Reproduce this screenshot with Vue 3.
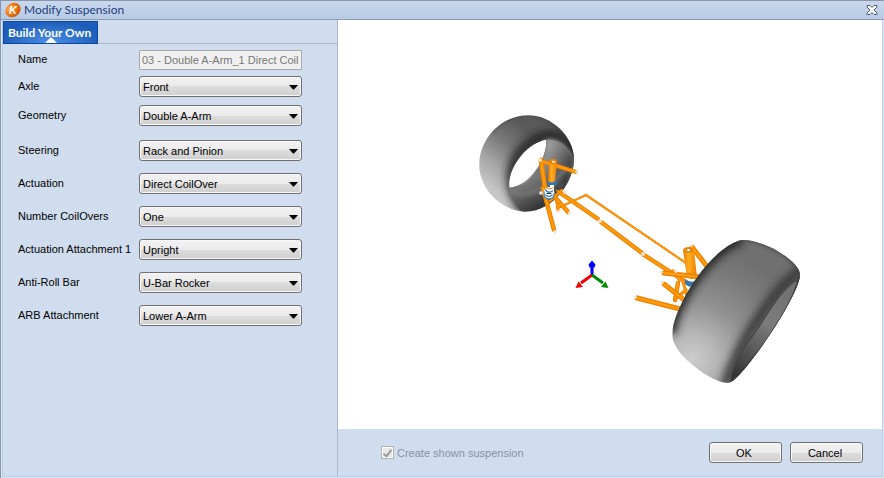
<script setup>
import { ref } from 'vue'

const name = ref('03 - Double A-Arm_1 Direct Coilover')
const shown = ref(true)

const groups = ref([
  {
    id: 'axle-group',
    fields: [{ id: 'axle', label: 'Axle', value: 'Front', options: ['Front', 'Rear'] }]
  },
  {
    id: 'geometry-group',
    fields: [{ id: 'geometry', label: 'Geometry', value: 'Double A-Arm', options: ['Double A-Arm'] }]
  },
  {
    id: 'details-group',
    fields: [
      { id: 'steering', label: 'Steering', value: 'Rack and Pinion', options: ['Rack and Pinion'] },
      { id: 'actuation', label: 'Actuation', value: 'Direct CoilOver', options: ['Direct CoilOver'] },
      { id: 'coilovers', label: 'Number CoilOvers', value: 'One', options: ['One', 'Two'] },
      { id: 'attachment', label: 'Actuation Attachment 1', value: 'Upright', options: ['Upright', 'Lower A-Arm'] },
      { id: 'antiroll', label: 'Anti-Roll Bar', value: 'U-Bar Rocker', options: ['U-Bar Rocker'] },
      { id: 'arb', label: 'ARB Attachment', value: 'Lower A-Arm', options: ['Lower A-Arm', 'Upright'] }
    ]
  }
])

// Suspension links: [x1, y1, x2, y2, thickness]
const rods = [
  [558, 208, 586, 195, 2.4],
  [586, 195, 686, 263, 2.2],
  [559, 192, 598, 219, 4.4],
  [601, 222, 642, 253, 4.4],
  [644, 255, 686, 282, 4.4],
  [556, 195, 558, 211, 3],
  [553, 195, 568, 212, 4.4],
  [550, 201, 562, 190, 2.5],
  [692, 247, 709, 269, 5],
  [681, 275, 688, 299, 3],
  [678, 283, 675, 300, 4.4],
  [675, 299, 686, 290, 3.4],
  [664, 284, 688, 303, 4.8],
  [637, 298, 684, 310, 5],
  [673, 271, 680, 280, 3.4],
  [541, 160, 545, 188, 5],
  [541, 161, 576, 172, 4.4],
  [543, 188, 554, 230, 4.6]
]
const joints = [
  [540, 160], [577, 172], [555, 232], [570, 213], [600, 221], [643, 254], [635, 297],
  [662, 282], [691, 245], [558, 212], [661, 272], [565, 192], [541, 193], [676, 271]
]
</script>

<template>
  <main class="dialog">
    <header class="titlebar">
      <svg class="logo" viewBox="0 0 16 16" aria-hidden="true">
        <defs>
          <radialGradient id="logoFill" cx=".4" cy=".3" r=".75">
            <stop offset="0" stop-color="#ffb25c" />
            <stop offset=".5" stop-color="#f47a12" />
            <stop offset="1" stop-color="#c24e00" />
          </radialGradient>
        </defs>
        <ellipse cx="8" cy="8" rx="8" ry="6.8" transform="rotate(-38 8 8)" fill="url(#logoFill)" />
        <text x="8" y="12" text-anchor="middle" class="logo-letter">K</text>
      </svg>
      <h1>Modify Suspension</h1>
      <button class="close" type="button" aria-label="Close">
        <svg viewBox="0 0 12 10" aria-hidden="true">
          <path d="M1 .5h3l2 2 2-2h3v1.5L8 5l3 3v1.5H8l-2-2-2 2H1V8l3-3-3-3z" fill="#fff" stroke="#525c70" />
        </svg>
      </button>
    </header>

    <div class="body">
      <section class="side">
        <nav class="tabs">
          <button class="tab" type="button">Build Your Own</button>
        </nav>
        <form class="form" @submit.prevent>
          <div class="row">
            <label for="name">Name</label>
            <input id="name" v-model="name" class="name" type="text" disabled />
          </div>
          <div v-for="g in groups" :key="g.id" class="group" :class="g.id">
            <div v-for="f in g.fields" :key="f.id" class="row">
              <label :for="f.id">{{ f.label }}</label>
              <div class="combo">
                <select :id="f.id" v-model="f.value">
                  <option v-for="o in f.options" :key="o">{{ o }}</option>
                </select>
                <svg class="arrow" viewBox="0 0 9 5" aria-hidden="true"><path d="M0 0h9L5 4.500H4z" /></svg>
              </div>
            </div>
          </div>
        </form>
      </section>

      <section class="main">
        <svg class="scene" viewBox="338 20 544 409" role="img" aria-label="Suspension preview">
          <defs>
            <linearGradient id="treadA" gradientUnits="userSpaceOnUse" x1="50" y1="240" x2="180" y2="80">
              <stop offset="0" stop-color="#c6c6c6" />
              <stop offset=".3" stop-color="#a6a6a6" />
              <stop offset=".65" stop-color="#787878" />
              <stop offset="1" stop-color="#5a5a5a" />
            </linearGradient>
            <linearGradient id="innerA" gradientUnits="userSpaceOnUse" x1="225" y1="130" x2="315" y2="180">
              <stop offset="0" stop-color="#a4a4a4" />
              <stop offset=".5" stop-color="#707070" />
              <stop offset="1" stop-color="#303030" />
            </linearGradient>
            <linearGradient id="lowerA" gradientUnits="userSpaceOnUse" x1="150" y1="245" x2="190" y2="320">
              <stop offset="0" stop-color="#777" />
              <stop offset="1" stop-color="#333" />
            </linearGradient>
            <radialGradient id="treadB" gradientUnits="userSpaceOnUse" cx="95" cy="385" r="340">
              <stop offset="0" stop-color="#cdcdcd" />
              <stop offset=".2" stop-color="#b8b8b8" />
              <stop offset=".5" stop-color="#909090" />
              <stop offset=".8" stop-color="#7a7a7a" />
              <stop offset="1" stop-color="#707070" />
            </radialGradient>
            <linearGradient id="rimB" gradientUnits="userSpaceOnUse" x1="390" y1="170" x2="220" y2="440">
              <stop offset="0" stop-color="#707070" />
              <stop offset=".4" stop-color="#7c7c7c" />
              <stop offset="1" stop-color="#333" />
            </linearGradient>
            <linearGradient id="coil" x1="0" x2="1" y1="0" y2="0">
              <stop offset="0" stop-color="#e87800" />
              <stop offset=".4" stop-color="#ffae20" />
              <stop offset="1" stop-color="#ee7c00" />
            </linearGradient>
            <filter id="soft" x="-30%" y="-30%" width="160%" height="160%"><feGaussianBlur stdDeviation="13" /></filter>
            <filter id="softer" x="-30%" y="-30%" width="160%" height="160%"><feGaussianBlur stdDeviation="7" /></filter>
            <clipPath id="clipA">
              <path clip-rule="evenodd" d="M28 175C30 100 95 31 175 31C245 31 310 95 312 160C313 225 255 318 165 320C95 318 24 250 28 175ZM230 104C175 110 112 185 118 248C165 246 228 180 230 104Z" />
            </clipPath>
            <clipPath id="clipB">
              <path d="M240 31C300 22 422 92 420 135C415 205 250 440 213 456C180 472 95 410 62 370C38 340 35 325 38 298C50 220 145 62 240 31Z" />
            </clipPath>
          </defs>

          <!-- far wheel -->
          <g transform="translate(470 105) scale(.33333)">
            <g clip-path="url(#clipA)">
              <rect x="20" y="20" width="300" height="310" fill="url(#treadA)" />
              <path d="M60 80C100 35 140 28 180 28S300 80 312 160" fill="none" stroke="#484848" stroke-width="10" filter="url(#softer)" />
              <path d="M315 150C270 75 225 78 172 122S102 240 168 325" fill="none" stroke="#222" stroke-width="28" filter="url(#soft)" />
              <path d="M228 104C265 98 300 125 312 165V330H165C140 305 122 280 118 248C180 246 228 180 228 104Z" fill="url(#lowerA)" />
              <path d="M228 104C265 98 300 125 312 165L285 240C250 230 225 215 212 180C225 155 228 130 228 104Z" fill="url(#innerA)" filter="url(#softer)" />
              <path d="M118 255C140 275 215 275 290 190" fill="none" stroke="#777" stroke-width="12" filter="url(#softer)" />
            </g>
          </g>

          <!-- links -->
          <g stroke-linecap="round">
            <g v-for="(r, i) in rods" :key="'r' + i">
              <line :x1="r[0]" :y1="r[1]" :x2="r[2]" :y2="r[3]" :stroke-width="r[4]" stroke="#ee7f00" />
              <line :x1="r[0]" :y1="r[1]" :x2="r[2]" :y2="r[3]" :stroke-width="r[4] / 2" stroke="#ff9c0c" />
            </g>
          </g>

          <!-- far coilover -->
          <ellipse cx="552" cy="183" rx="5" ry="3" fill="#2f76b4" />
          <path d="M549 161.500L548 181Q551 184 555 181L557 162Z" fill="url(#coil)" />
          <ellipse cx="553" cy="161.500" rx="4" ry="2.500" fill="#f08000" />
          <ellipse cx="553.500" cy="161.800" rx="1.500" ry="1" fill="#fff" />
          <rect x="550" y="185" width="4" height="5" fill="#fff" />
          <ellipse cx="549" cy="193" rx="5.500" ry="6" fill="#fff" />
          <g fill="none" stroke-linecap="round">
            <path d="M544 192q0 7 5 7t5-5M545.500 190q3 4 7 1M546 195q3 3 6 0" stroke="#3b82ba" stroke-width="1.300" />
            <path d="M546 188q3 2 7 0M556 190l3 4" stroke="#f59211" />
            <path d="M547 193.500h4" stroke="#234" />
          </g>

          <!-- near coilover -->
          <path d="M685 279q6 5 12 1v6q-7 3-12-2z" fill="#3377a8" />
          <path d="M683 250L687 277Q692 281 697 277L694 250Z" fill="url(#coil)" />
          <ellipse cx="688.500" cy="250" rx="5.500" ry="3" fill="#f08800" />
          <ellipse cx="688.500" cy="250" rx="2" ry="1.500" fill="#fff" stroke="#9c5a10" stroke-width=".5" />
          <g stroke-linecap="round">
            <line x1="664" y1="273" x2="700" y2="277" stroke="#ee7f00" stroke-width="5" />
            <line x1="664" y1="273" x2="700" y2="277" stroke="#ffa31a" stroke-width="2" />
          </g>
          <g>
            <g v-for="(j, i) in joints" :key="'j' + i">
              <circle :cx="j[0]" :cy="j[1]" r="1.800" fill="#fff" />
              <circle :cx="j[0]" :cy="j[1]" r="1" fill="#ddd8d2" />
            </g>
          </g>

          <!-- near wheel -->
          <g transform="translate(660 230) scale(.33333)">
            <g clip-path="url(#clipB)">
              <rect x="30" y="20" width="400" height="450" fill="url(#treadB)" />
              <path d="M30 310C40 220 140 60 245 25" fill="none" stroke="#202020" stroke-width="34" filter="url(#soft)" />
              <path d="M225 24C310 20 410 80 425 140" fill="none" stroke="#444" stroke-width="12" filter="url(#softer)" />
              <path d="M425 120C370 150 245 310 195 470" fill="none" stroke="#383838" stroke-width="30" filter="url(#soft)" />
              <path d="M418 148C380 160 345 215 300 285C255 350 215 400 213 456C290 400 410 210 420 140Z" fill="url(#rimB)" />
              <path d="M418 148C380 160 345 215 300 285C255 350 215 400 213 445" fill="none" stroke="#484848" stroke-width="4" />
              <path d="M420 140C410 210 290 400 213 456" fill="none" stroke="#3a3a3a" stroke-width="12" />
            </g>
          </g>

          <!-- axis triad -->
          <g stroke-width="3">
            <path d="M592 275V265" stroke="#00f" />
            <path d="M592 260.500l3.500 4-1 3h-5l-1-3z" fill="#00f" />
            <path d="M592 275L581 283" stroke="#f00000" />
            <path d="M575.500 288l3-6.500 4.500 5.500z" fill="#f00000" />
            <path d="M592 275L603 283" stroke="#008a00" />
            <path d="M608.500 288l-3-6.500-4.500 5.500z" fill="#008a00" />
          </g>
        </svg>

        <footer class="footer">
          <label class="check">
            <input v-model="shown" type="checkbox" disabled />
            <span>Create shown suspension</span>
          </label>
          <div class="actions">
            <button class="push" type="button">OK</button>
            <button class="push" type="button">Cancel</button>
          </div>
        </footer>
      </section>
    </div>
  </main>
</template>

<style>
body {
  margin: 0;
  background: #d0ddee;
}
</style>

<style scoped>
* {
  box-sizing: border-box;
}

.dialog {
  display: flex;
  flex-direction: column;
  min-height: 100vh;
  border-left: 1px solid #8995a8;
  background: #dce8f7;
  color: #000;
  font: 11px/16px "Liberation Sans", sans-serif;
}

.titlebar {
  display: flex;
  align-items: center;
  height: 20px;
  padding: 0 6px 0 4px;
  border-top: 1px solid #8995a8;
  border-bottom: 1px solid #8c9bb3;
  background: linear-gradient(#c8d8ed, #b7cbe6);
}

.logo {
  width: 16px;
  height: 16px;
  margin-right: 3px;
}

.logo-letter {
  fill: #fff;
  font: italic bold 11px "Liberation Sans", sans-serif;
}

h1 {
  flex: 1;
  margin: 0;
  color: #1f3d7d;
  font: 12px/16px Lato, sans-serif;
}

.close {
  display: flex;
  padding: 0;
  border: 0;
  background: none;
}

.close svg {
  width: 12px;
  height: 10px;
}

.body {
  display: grid;
  flex: 1;
  grid-template-columns: 335px 1fr;
  margin: 0 1px 1px;
  border: solid #b9cee9;
  border-width: 0 1px 1px;
  background: #d0ddee;
}

.side {
  border-right: 1px solid #a9b8cf;
}

.tabs {
  display: flex;
  height: 24px;
  padding-top: 1px;
  border-bottom: 1px solid #a9b8cf;
}

.tab {
  position: relative;
  height: 23px;
  padding: 0 6px 0 4px;
  border: 1px solid #0b46a0;
  background: radial-gradient(ellipse at 50% 90%, #4c8de6, #1c5dbb 75%);
  color: #fff;
  font: bold 12px/20px Lato, sans-serif;
}

.tab::after {
  position: absolute;
  bottom: 0;
  left: 50%;
  border: solid transparent;
  border-width: 0 6px 6px;
  border-bottom-color: #fff;
  content: "";
  transform: translateX(-50%);
}

.form {
  padding: 6px 35px 20px 15px;
}

.row {
  display: grid;
  grid-template-columns: 121px 1fr;
  align-items: center;
}

.row label {
  padding-bottom: 2px;
  white-space: nowrap;
}

.group {
  display: grid;
  gap: 12px;
}

.axle-group {
  margin-top: 6px;
}

.geometry-group {
  margin-top: 8px;
}

.details-group {
  margin-top: 14px;
}

.name {
  width: 100%;
  height: 20px;
  padding: 0 2px;
  border: 1px solid #a9a9a9;
  border-radius: 1px;
  background: #f0f0f0;
  color: #777;
  font: inherit;
}

.combo {
  position: relative;
}

select {
  display: block;
  width: 100%;
  height: 21px;
  padding: 0 20px 0 3px;
  border: 1px solid #707070;
  border-radius: 3px;
  appearance: none;
  background: linear-gradient(#f2f2f2, #ebebeb 50%, #dddddd 50%, #cfcfcf);
  box-shadow: inset 0 0 0 1px #f8f8f8;
  color: #000;
  font: inherit;
}

.arrow {
  position: absolute;
  top: 9px;
  right: 4px;
  width: 9px;
  height: 5px;
  pointer-events: none;
}

.main {
  display: flex;
  flex-direction: column;
  min-width: 0;
}

.scene {
  flex: 1;
  width: 100%;
  min-height: 0;
  background: #fff;
}

.footer {
  display: flex;
  align-items: center;
  justify-content: space-between;
  height: 47px;
  padding: 0 19px 0 43px;
}

.check {
  display: flex;
  gap: 3px;
  align-items: center;
  color: #8593a6;
}

.check input {
  display: grid;
  width: 13px;
  height: 13px;
  margin: 0;
  place-items: center;
  border: 1px solid #aeb3b9;
  appearance: none;
  background: #e9e9e9;
  box-shadow: inset 0 0 0 1px #fff;
}

.check input:checked::before {
  width: 3px;
  height: 7px;
  border: solid #9a9a9a;
  border-width: 0 2px 2px 0;
  content: "";
  transform: rotate(38deg);
}

.actions {
  display: flex;
  gap: 8px;
}

.push {
  width: 73px;
  height: 21px;
  padding: 0 3px 0 0;
  border: 1px solid #707070;
  border-radius: 3px;
  background: linear-gradient(#f2f2f2, #ebebeb 50%, #dddddd 50%, #cfcfcf);
  box-shadow: inset 0 0 0 1px #f8f8f8;
  color: #000;
  font: inherit;
}
</style>
